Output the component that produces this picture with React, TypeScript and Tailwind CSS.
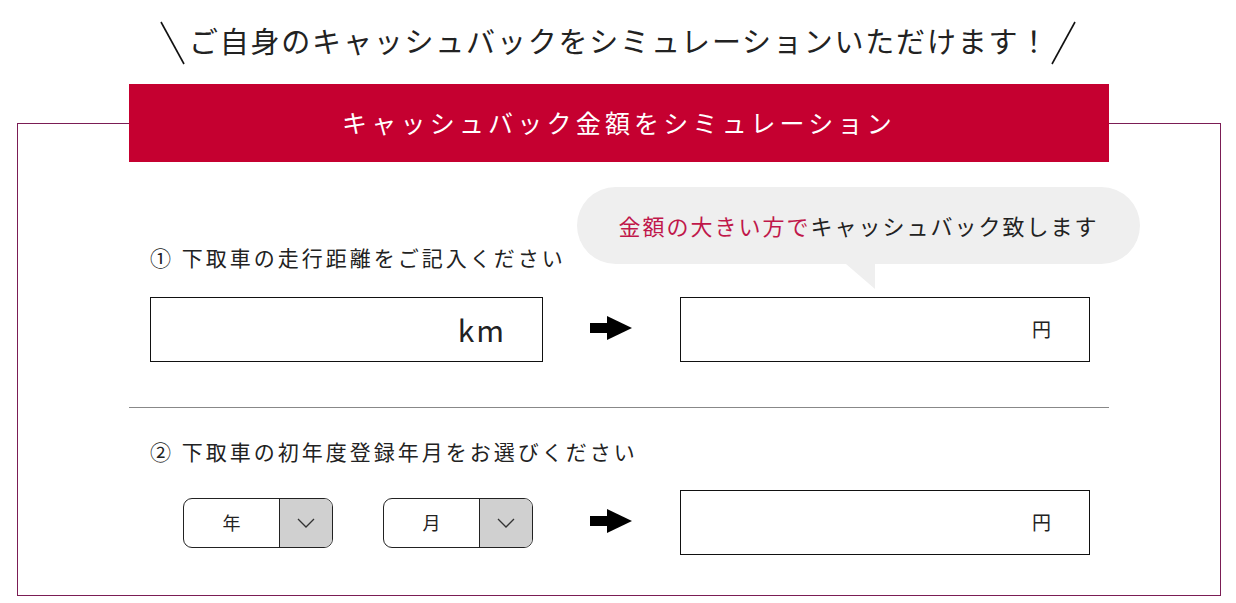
import React from "react";

const Arrow = () => (
  <svg width="42" height="24" viewBox="0 0 42 24" className="shrink-0">
    <rect x="0" y="7" width="19" height="10" fill="#000" />
    <polygon points="17,0 42,12 17,24" fill="#000" />
  </svg>
);

const Chevron = () => (
  <svg width="18" height="10" viewBox="0 0 18 10">
    <polyline points="1,1 9,9 17,1" fill="none" stroke="#333" strokeWidth="1.3" />
  </svg>
);

const SelectBox = ({ label }: { label: string }) => (
  <div className="flex h-[50px] w-[150px] overflow-hidden rounded-[9px] border border-[#222] bg-white">
    <div className="flex flex-1 items-center justify-center text-[18px]">{label}</div>
    <div className="flex w-[53px] items-center justify-center border-l border-[#222] bg-[#d0d0d0]">
      <Chevron />
    </div>
  </div>
);

const ResultBox = () => (
  <div className="flex h-[65px] w-[410px] items-center justify-end border border-[#111] pr-[38px] text-[19px]">
    円
  </div>
);

const App = () => {
  return (
    <div
      className="min-h-[603px] w-full bg-white text-[#222]"
      style={{ fontFamily: '"Noto Sans CJK JP", "Noto Sans", sans-serif' }}
    >
      {/* title */}
      <div className="flex h-[86px] items-start justify-center pt-[21px]">
        <svg width="26" height="44" viewBox="0 0 26 44" className="mr-[3px]">
          <line x1="1" y1="1" x2="24" y2="43" stroke="#111" strokeWidth="1.6" />
        </svg>
        <h1 className="text-[29px] leading-[38px] tracking-[1.8px]">
          ご自身のキャッシュバックをシミュレーションいただけます！
        </h1>
        <svg width="26" height="44" viewBox="0 0 26 44">
          <line x1="25" y1="1" x2="2" y2="43" stroke="#111" strokeWidth="1.6" />
        </svg>
      </div>

      {/* simulator box */}
      <div className="ml-[17px] mr-[15px] mt-[37px] border border-[#7b1d55] pb-[40px]">
        <div className="mx-[111px] -mt-[40px] flex h-[78px] items-center justify-center bg-[#c50030] text-[25px] tracking-[4.2px] text-white">
          キャッシュバック金額をシミュレーション
        </div>

        <div className="mx-[111px]">
          {/* step 1 */}
          <div className="relative pl-[21px]">
            <div className="absolute right-[-31px] top-[25px] flex h-[77px] w-[563px] items-center justify-center rounded-full bg-[#efefef] text-[22px] tracking-[2px]">
              <span className="text-[#c0174a]">金額の大きい方で</span>
              <span>キャッシュバック致します</span>
              <div className="absolute bottom-[-25px] left-[269px] h-0 w-0 border-l-[29px] border-t-[25px] border-l-transparent border-t-[#efefef]" />
            </div>
            <p className="pt-[80px] text-[21px] leading-[30px] tracking-[3px]">
              ① 下取車の走行距離をご記入ください
            </p>
            <div className="mt-[25px] flex items-center">
              <div className="flex h-[65px] w-[393px] items-center justify-end border border-[#111] pr-[36px] text-[30px] tracking-[2px]">
                km
              </div>
              <div className="ml-[47px] mr-[48px] -mt-[3px]">
                <Arrow />
              </div>
              <ResultBox />
            </div>
          </div>

          <div className="mt-[45px] h-px bg-[#888]" />

          {/* step 2 */}
          <div className="pl-[21px]">
            <p className="pt-[28px] text-[21px] leading-[30px] tracking-[3px]">
              ② 下取車の初年度登録年月をお選びください
            </p>
            <div className="mt-[24px] flex items-center">
              <div className="ml-[33px]">
                <SelectBox label="年" />
              </div>
              <div className="ml-[50px]">
                <SelectBox label="月" />
              </div>
              <div className="ml-[57px] mr-[48px] -mt-[3px]">
                <Arrow />
              </div>
              <ResultBox />
            </div>
          </div>
        </div>
      </div>
    </div>
  );
};

export default App;
